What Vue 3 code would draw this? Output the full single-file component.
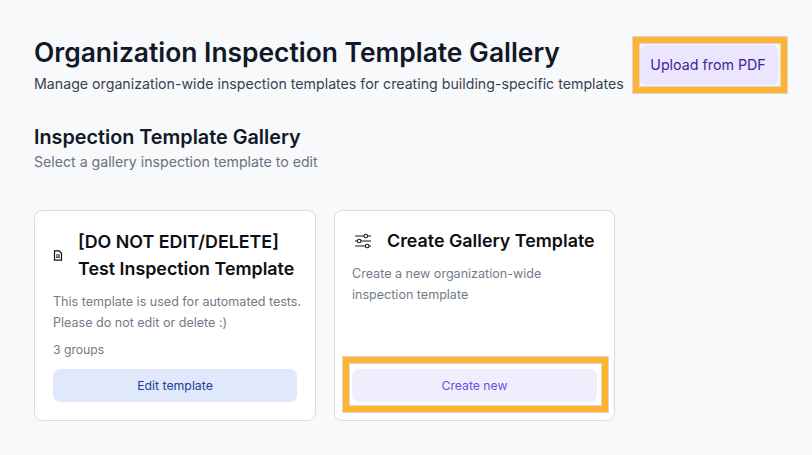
<template>
	<div class="page">
		<header class="page__header">
			<div class="page__titles">
				<h1 class="page__title">Organization Inspection Template Gallery</h1>
				<p class="page__subtitle">Manage organization-wide inspection templates for creating building-specific templates</p>
			</div>
			<div class="highlight highlight--top">
				<button class="button button--upload">Upload from PDF</button>
			</div>
		</header>

		<section class="gallery">
			<h2 class="gallery__title">Inspection Template Gallery</h2>
			<p class="gallery__subtitle">Select a gallery inspection template to edit</p>

			<div class="gallery__cards">
				<article class="card">
					<div class="card__head">
						<svg class="card__doc" viewBox="0 0 10 11" fill="none" stroke="#0d0f14" stroke-width="1.200">
							<path d="M1.500 .8h4.600l2.400 2.500v6.900h-7z" />
							<path d="M3 5h4M3 7.200h4" />
						</svg>
						<h3 class="card__title">
							[DO NOT EDIT/DELETE]<br />Test Inspection Template
						</h3>
					</div>
					<p class="card__text card__text--wide">This template is used for automated tests. Please do not edit or delete :)</p>
					<p class="card__count">3 groups</p>
					<button class="button button--edit">Edit template</button>
				</article>

				<article class="card card--create">
					<div class="card__head card__head--create">
						<svg class="card__sliders" viewBox="0 0 18 16" fill="none" stroke="#111827" stroke-width="1.100">
							<path d="M1 3h9M13.600 3h3.400M1 8h2.400M7 8h10M1 13h10.500M15 13h2" />
							<circle cx="11.800" cy="3" r="1.800" />
							<circle cx="5.200" cy="8" r="1.800" />
							<circle cx="13.200" cy="13" r="1.800" />
						</svg>
						<h3 class="card__title">Create Gallery Template</h3>
					</div>
					<p class="card__text card__text--create">Create a new organization-wide inspection template</p>
					<div class="highlight highlight--card">
						<button class="button button--create">Create new</button>
					</div>
				</article>
			</div>
		</section>
	</div>
</template>

<script setup>
</script>

<style>
body {
	margin: 0;
	background: #f8f9fb;
}
</style>

<style scoped>
.page {
	box-sizing: border-box;
	width: 812px;
	height: 455px;
	padding: 37px 25px 0 34px;
	background: #f8f9fb;
	font-family: Inter, "Liberation Sans", sans-serif;
	overflow: hidden;
}

.page__header {
	display: flex;
	justify-content: space-between;
	align-items: flex-start;
}

.page__title {
	margin: 0;
	font-size: 26.400px;
	line-height: 30px;
	font-weight: 600;
	color: #111827;
}

.page__subtitle {
	margin: 7px 0 0;
	font-size: 14.200px;
	line-height: 20px;
	color: #374151;
}

.gallery {
	margin-top: 29px;
}

.gallery__title {
	margin: 0;
	font-size: 19.800px;
	line-height: 28px;
	font-weight: 600;
	color: #111827;
}

.gallery__subtitle {
	margin: 1px 0 0;
	font-size: 14.150px;
	line-height: 20px;
	color: #6b7280;
}

.gallery__cards {
	display: flex;
	gap: 18px;
	margin-top: 38px;
}

.card {
	box-sizing: border-box;
	position: relative;
	display: flex;
	flex-direction: column;
	width: 282px;
	height: 211px;
	padding: 17px 18px 18px;
	background: #fff;
	border: 1px solid #d9dce3;
	border-radius: 8px;
}

.card--create {
	width: 281px;
	padding-left: 17px;
	padding-top: 16px;
}

.card__head {
	display: flex;
	align-items: center;
	gap: 15px;
}

.card__doc {
	width: 10px;
	height: 11px;
	flex: none;
}

.card__sliders {
	width: 18px;
	height: 16px;
	margin-left: 2px;
	flex: none;
}

.card__title {
	margin: 0;
	font-size: 17.850px;
	line-height: 27px;
	font-weight: 600;
	color: #0d0f14;
}

.card__text {
	margin: 9px 0 0;
	font-size: 12.550px;
	line-height: 21px;
	color: #737a87;
}

.card__text--wide {
	margin-right: -8px;
}

.card__text--create {
	padding-right: 30px;
}

.card__count {
	margin: 7px 0 0;
	font-size: 12.200px;
	line-height: 20px;
	color: #737a87;
}

.button {
	display: block;
	border: none;
	font-family: inherit;
	cursor: pointer;
}

.button--upload {
	width: 138px;
	height: 40px;
	padding: 1px 8px 3px 6px;
	font-size: 14.250px;
	border-radius: 7px;
	background: #ebe5fd;
	color: #3c1f9b;
}

.button--edit {
	width: 100%;
	height: 33px;
	margin-top: auto;
	font-size: 12.300px;
	border-radius: 7px;
	background: #e0e9fc;
	color: #1e3a9a;
}

.button--create {
	width: 245px;
	height: 33px;
	font-size: 12.200px;
	border-radius: 7px;
	background: #f0edfc;
	color: #6b4ee6;
}

.highlight {
	box-sizing: border-box;
	border: 6px solid #ffb32e;
	outline: 1px solid #d5d8e0;
	background: #fff;
	box-shadow: inset 0 0 0 1px #d5d8e0;
}

.highlight--top {
	width: 154px;
	height: 56px;
	padding: 2px 1px;
	background: #f4f5fa;
}

.highlight--card {
	position: absolute;
	left: 8px;
	bottom: 8px;
	width: 265px;
	height: 55px;
	padding: 6px 3px;
}
</style>
